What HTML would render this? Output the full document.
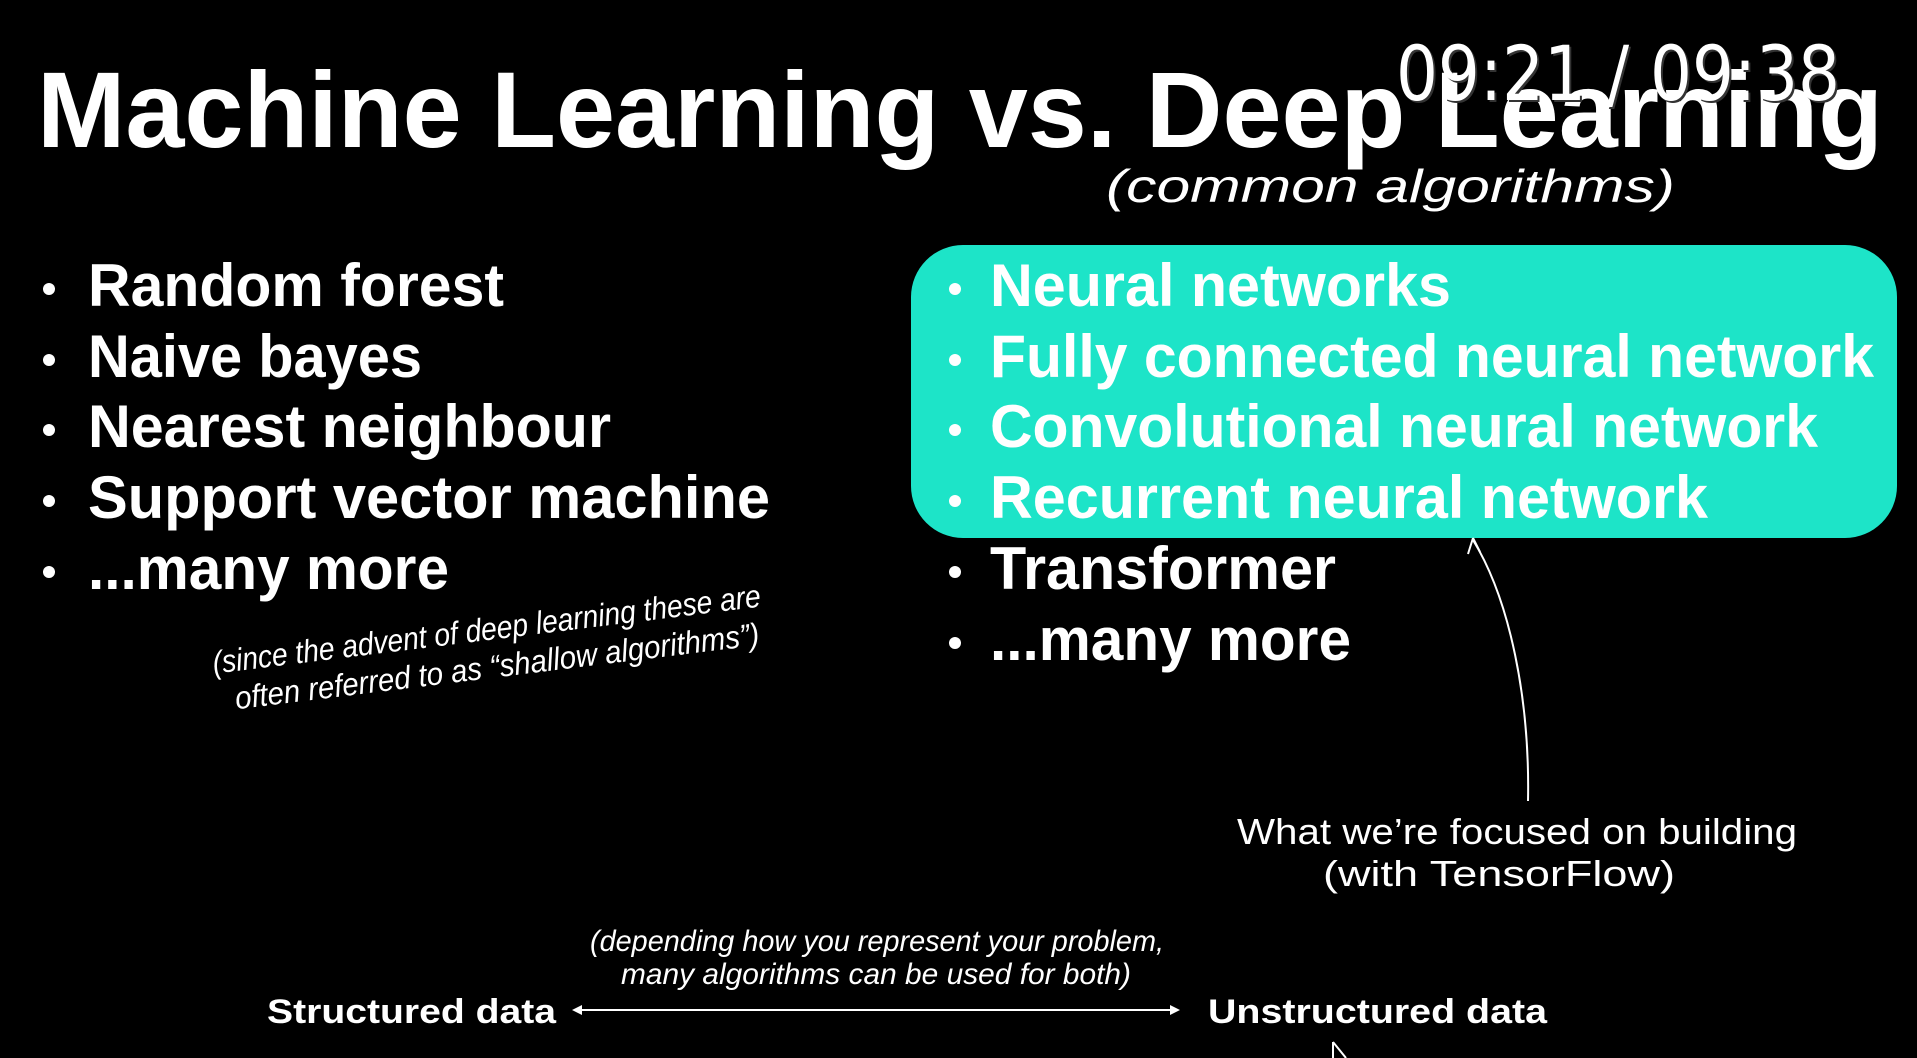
<!DOCTYPE html>
<html><head><meta charset="utf-8"><style>
html,body{margin:0;padding:0;background:#000;width:1917px;height:1058px;overflow:hidden}
svg{display:block}
.b{font-family:"Liberation Sans",sans-serif;font-weight:bold;fill:#fff}
.r{font-family:"Liberation Sans",sans-serif;fill:#fff}
.h{font-family:"Liberation Sans Narrow","Liberation Sans",sans-serif;font-style:italic;fill:#fff}
</style></head><body>
<svg width="1917" height="1058" viewBox="0 0 1917 1058" xmlns="http://www.w3.org/2000/svg">
<rect width="1917" height="1058" fill="#000"/>
<text class="b" x="37" y="147" font-size="108" textLength="1846" lengthAdjust="spacingAndGlyphs">Machine Learning vs. Deep Learning</text>
<text class="h" x="1106" y="202" font-size="46" textLength="569" lengthAdjust="spacingAndGlyphs">(common algorithms)</text>
<rect x="911" y="245" width="986" height="293" rx="52" fill="#1de4c8"/>
<g class="b" font-size="60">
<text x="88" y="306" textLength="416" lengthAdjust="spacingAndGlyphs">Random forest</text>
<text x="88" y="377" textLength="334" lengthAdjust="spacingAndGlyphs">Naive bayes</text>
<text x="88" y="447" textLength="523" lengthAdjust="spacingAndGlyphs">Nearest neighbour</text>
<text x="88" y="518" textLength="682" lengthAdjust="spacingAndGlyphs">Support vector machine</text>
<text x="88" y="589" textLength="361" lengthAdjust="spacingAndGlyphs">...many more</text>
<text x="990" y="306" textLength="461" lengthAdjust="spacingAndGlyphs">Neural networks</text>
<text x="990" y="377" textLength="884" lengthAdjust="spacingAndGlyphs">Fully connected neural network</text>
<text x="990" y="447" textLength="828" lengthAdjust="spacingAndGlyphs">Convolutional neural network</text>
<text x="990" y="518" textLength="718" lengthAdjust="spacingAndGlyphs">Recurrent neural network</text>
<text x="990" y="589" textLength="346" lengthAdjust="spacingAndGlyphs">Transformer</text>
<text x="990" y="660" textLength="361" lengthAdjust="spacingAndGlyphs">...many more</text>
</g>
<g fill="#fff">
<circle cx="49" cy="289" r="6"/><circle cx="49" cy="360" r="6"/><circle cx="49" cy="430" r="6"/><circle cx="49" cy="501" r="6"/><circle cx="49" cy="572" r="6"/>
<circle cx="955" cy="289" r="6"/><circle cx="955" cy="360" r="6"/><circle cx="955" cy="430" r="6"/><circle cx="955" cy="501" r="6"/><circle cx="955" cy="572" r="6"/><circle cx="955" cy="643" r="6"/>
</g>
<g transform="rotate(-7 489 650)">
<text class="h" x="489" y="640" font-size="32" text-anchor="middle" textLength="552" lengthAdjust="spacingAndGlyphs">(since the advent of deep learning these are</text>
<text class="h" x="495" y="678" font-size="32" text-anchor="middle" textLength="528" lengthAdjust="spacingAndGlyphs">often referred to as “shallow algorithms”)</text>
</g>
<path d="M1528 801 C1530 700 1510 600 1473 540" stroke="#fff" stroke-width="2" fill="none"/>
<path d="M1473 538 L1468 554 M1473 538 L1480 552" stroke="#fff" stroke-width="2" fill="none"/>
<text class="r" x="1237" y="844" font-size="36" textLength="560" lengthAdjust="spacingAndGlyphs">What we’re focused on building</text>
<text class="r" x="1323" y="886" font-size="36" textLength="352" lengthAdjust="spacingAndGlyphs">(with TensorFlow)</text>
<text class="h" x="590" y="951" font-size="30" textLength="574" lengthAdjust="spacingAndGlyphs">(depending how you represent your problem,</text>
<text class="h" x="621" y="984" font-size="30" textLength="510" lengthAdjust="spacingAndGlyphs">many algorithms can be used for both)</text>
<text class="b" x="267" y="1023" font-size="34" textLength="289" lengthAdjust="spacingAndGlyphs">Structured data</text>
<text class="b" x="1208" y="1023" font-size="34" textLength="339" lengthAdjust="spacingAndGlyphs">Unstructured data</text>
<line x1="574" y1="1010" x2="1178" y2="1010" stroke="#fff" stroke-width="2"/>
<path d="M572 1010 L582 1005 L582 1015Z M1180 1010 L1170 1005 L1170 1015Z" fill="#fff"/>
<path d="M1333 1042 L1333 1058 M1333 1042 L1346 1058" stroke="#fff" stroke-width="2" fill="none"/>
<text x="1396" y="100" font-family="DejaVu Sans Condensed,DejaVu Sans,sans-serif" font-size="76" fill="#333" textLength="444" lengthAdjust="spacingAndGlyphs" transform="translate(2,2)">09:21 / 09:38</text>
<text x="1396" y="100" font-family="DejaVu Sans Condensed,DejaVu Sans,sans-serif" font-size="76" fill="#fff" textLength="444" lengthAdjust="spacingAndGlyphs">09:21 / 09:38</text>
</svg>
</body></html>
